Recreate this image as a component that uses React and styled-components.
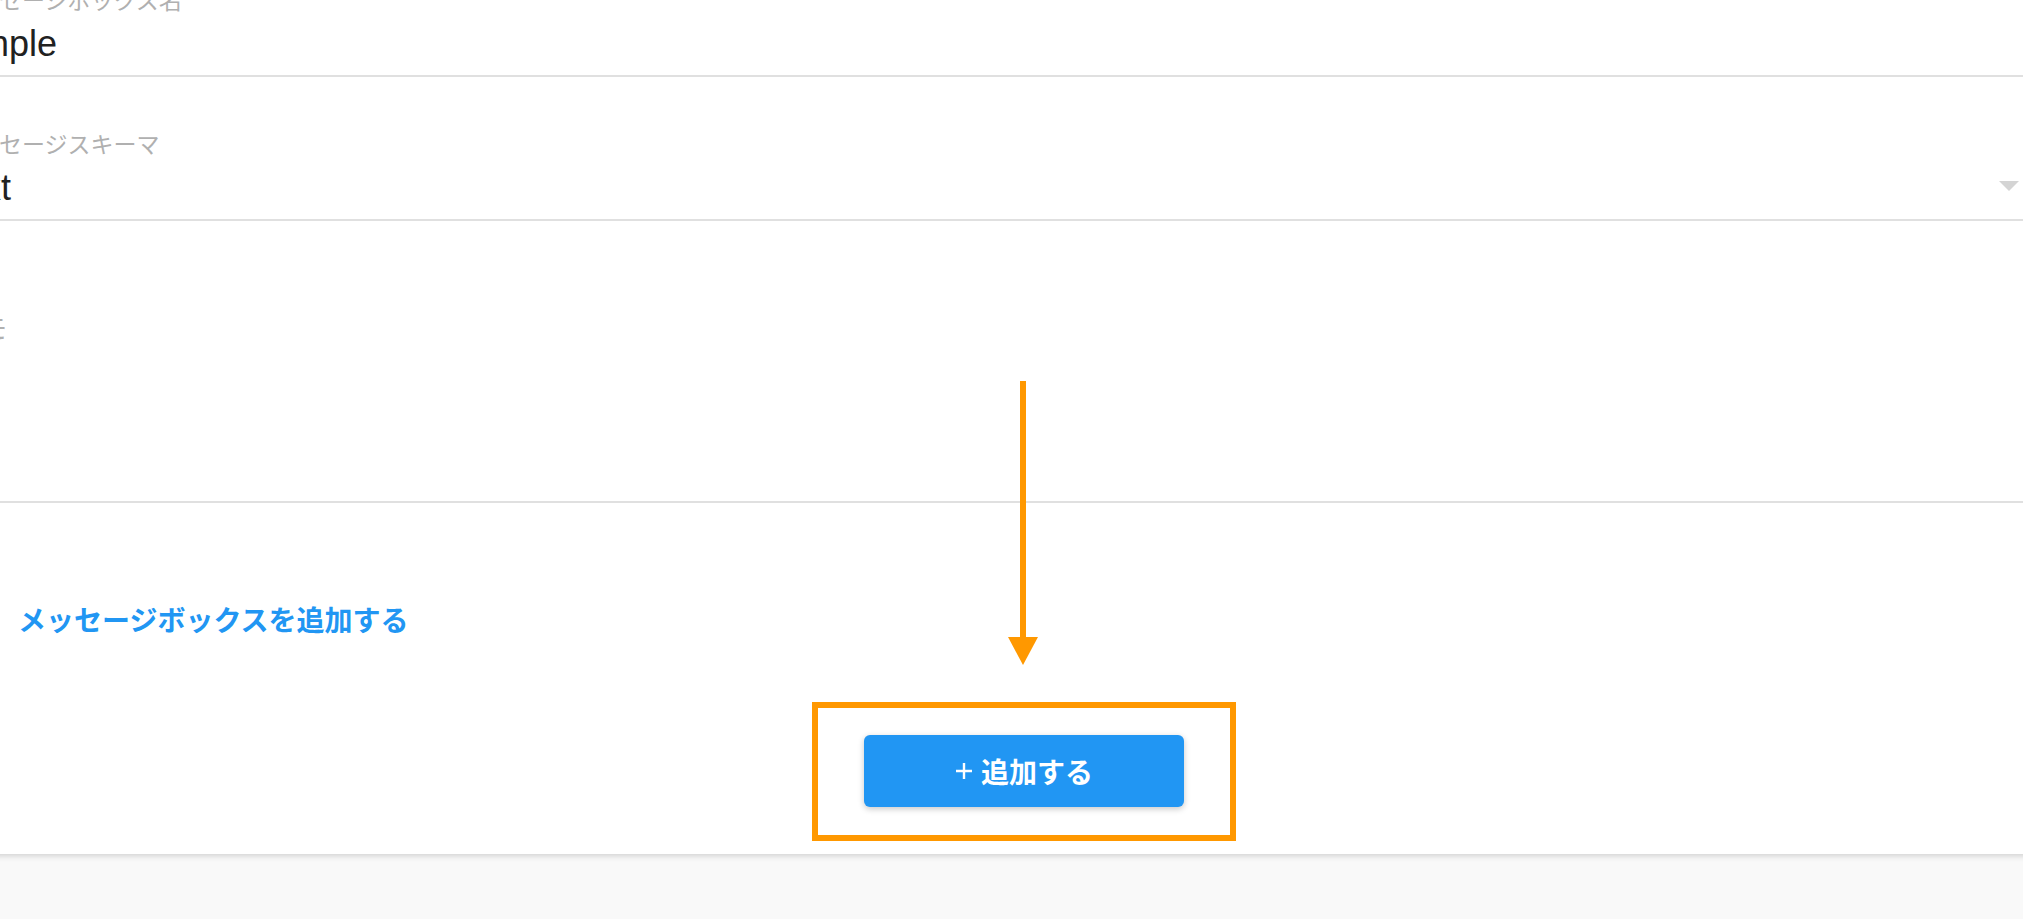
import React from "react";
import styled, { createGlobalStyle } from "styled-components";

const GlobalStyle = createGlobalStyle`
  html, body {
    margin: 0;
    padding: 0;
    background: #f9f9f9;
    overflow: hidden;
  }
  body {
    font-family: "Liberation Sans", "Noto Sans CJK JP", sans-serif;
  }
`;

const Page = styled.div`
  position: relative;
  display: flow-root;
  height: 919px;
  background: #f9f9f9;
`;

const Card = styled.div`
  box-sizing: border-box;
  width: 2190px;
  margin: -67px 0 0 -107px;
  padding: 0 60px 13px;
  background: #fff;
  box-shadow: 0 2px 6px rgba(0, 0, 0, 0.16);
`;

const Field = styled.div`
  padding: ${(p) => p.$top}px 0 11px;
  border-bottom: 2px solid #e0e0e0;
`;

const Label = styled.div`
  font-family: "Noto Sans CJK JP", sans-serif;
  font-size: ${(p) => p.$size || 23}px;
  line-height: ${(p) => p.$size || 23}px;
  color: #b0b0b0;
  white-space: nowrap;
`;

const Value = styled.div`
  display: flex;
  align-items: ${(p) => (p.$multi ? "flex-start" : "center")};
  justify-content: space-between;
  height: ${(p) => p.$height || 40}px;
  margin-top: 13px;
  font-size: 36px;
  line-height: 40px;
  color: #212121;
`;

const SelectArrow = styled.span`
  width: 0;
  height: 0;
  margin: 0 4px 4px 0;
  border-left: 10px solid transparent;
  border-right: 10px solid transparent;
  border-top: 10px solid #d4d4d4;
`;

const AddLink = styled.a`
  display: block;
  margin: 102px 0 0 65px;
  font-family: "Noto Sans CJK JP", sans-serif;
  font-size: 28px;
  line-height: 28px;
  font-weight: 700;
  color: #2196f3;
  text-decoration: none;
  cursor: pointer;
`;

const Actions = styled.div`
  display: flex;
  justify-content: center;
  margin-top: 69px;
  padding-left: 72px;
`;

const Highlight = styled.div`
  padding: 27px 46px 28px;
  border: 6px solid #ff9800;
`;

const SubmitButton = styled.button`
  display: flex;
  align-items: center;
  justify-content: center;
  gap: 8px;
  width: 320px;
  height: 72px;
  border: none;
  border-radius: 6px;
  background: #2196f3;
  color: #fff;
  font-family: "Noto Sans CJK JP", sans-serif;
  font-size: 28px;
  font-weight: 700;
  box-shadow: 0 2px 6px rgba(0, 0, 0, 0.22);
  cursor: pointer;
`;

const ArrowMark = styled.svg`
  position: absolute;
  left: 1008px;
  top: 381px;
`;

const fields = [
  { label: "メッセージボックス名", value: "simple", top: 55 },
  { label: "メッセージスキーマ", value: "text", top: 55, select: true },
  { label: "メモ", value: "", top: 93, size: 27, height: 136 },
];

export default function App() {
  return (
    <Page>
      <GlobalStyle />
      <Card>
        {fields.map((f) => (
          <Field key={f.label} $top={f.top}>
            <Label $size={f.size}>{f.label}</Label>
            <Value $height={f.height} $multi={!!f.height}>
              <span>{f.value}</span>
              {f.select && <SelectArrow />}
            </Value>
          </Field>
        ))}
        <AddLink>メッセージボックスを追加する</AddLink>
        <Actions>
          <Highlight>
            <SubmitButton type="button">
              <svg width="18" height="18" viewBox="0 0 18 18">
                <path d="M9 1v16M1 9h16" stroke="#fff" strokeWidth="2.4" />
              </svg>
              追加する
            </SubmitButton>
          </Highlight>
        </Actions>
      </Card>
      <ArrowMark width="30" height="284" viewBox="0 0 30 284">
        <rect x="12" y="0" width="6" height="258" fill="#ff9800" />
        <polygon points="0,256 30,256 15,284" fill="#ff9800" />
      </ArrowMark>
    </Page>
  );
}
